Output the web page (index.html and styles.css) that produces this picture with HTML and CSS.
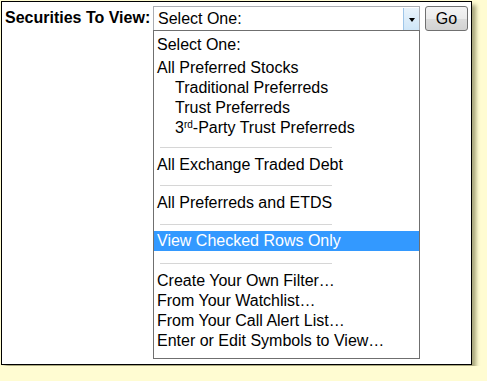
FILE: index.html
```html
<!DOCTYPE html>
<html lang="en">
<head>
    <meta charset="UTF-8">
    <title>Securities To View</title>
    <link rel="stylesheet" href="styles.css">
</head>
<body>
    <div class="frame">
        <div class="field-label">Securities To View:</div>

        <div class="picker">
            <div class="select-box">
                <span class="select-value">Select One:</span>
                <span class="select-arrow"></span>
            </div>
            <div class="option-list">
                <div class="option first">Select One:</div>
                <div class="option">All Preferred Stocks</div>
                <div class="option sub">Traditional Preferreds</div>
                <div class="option sub">Trust Preferreds</div>
                <div class="option sub">3<sup>rd</sup>-Party Trust Preferreds</div>
                <div class="divider"></div>
                <div class="option">All Exchange Traded Debt</div>
                <div class="divider wide"></div>
                <div class="option">All Preferreds and ETDS</div>
                <div class="divider before-active"></div>
                <div class="option active">View Checked Rows Only</div>
                <div class="divider after-active"></div>
                <div class="option">Create Your Own Filter…</div>
                <div class="option">From Your Watchlist…</div>
                <div class="option">From Your Call Alert List…</div>
                <div class="option">Enter or Edit Symbols to View…</div>
            </div>
        </div>

        <button class="go-button">Go</button>
    </div>
</body>
</html>
```

FILE: styles.css
```css
body {
    margin: 0;
    background-color: #fffcd2;
    font-family: 'Liberation Sans', Arial, sans-serif;
    color: #000;
}

.frame {
    margin: 1px;
    width: 466px;
    height: 358px;
    border: 1px solid #000;
    background-color: #fff;
    box-shadow: 4px 4px 4px rgba(60, 60, 20, 0.45);
    display: flex;
    align-items: flex-start;
    padding: 4px 0 0 3px;
}

.field-label {
    flex: 0 0 148px;
    font-weight: bold;
    font-size: 16px;
    line-height: 24px;
    white-space: nowrap;
}

.picker {
    width: 267px;
    display: flex;
    flex-direction: column;
}

.select-box {
    height: 24px;
    border: 1px solid #abadb3;
    border-bottom: none;
    box-sizing: border-box;
    display: flex;
    align-items: flex-start;
    padding-top: 1px;
}

.select-value {
    flex: 1;
    font-size: 16px;
    line-height: 22px;
    padding-left: 4px;
}

.select-arrow {
    width: 16px;
    height: 22px;
    box-sizing: border-box;
    border-left: 1px solid #9fc6e9;
    background: linear-gradient(to bottom, #eaf4fc, #cfe6f8);
    display: flex;
    align-items: center;
    justify-content: center;
}

.select-arrow::after {
    content: "";
    border-left: 3px solid transparent;
    border-right: 3px solid transparent;
    border-top: 4px solid #000;
    margin-top: 1px;
}

.option-list {
    height: 329px;
    border: 1px solid #6f6f6f;
    box-sizing: border-box;
    padding: 4px 0 7px 0;
}

.option {
    font-size: 16px;
    line-height: 20px;
    height: 20px;
    padding-left: 3px;
    white-space: nowrap;
}

.option.first {
    margin-bottom: 3px;
}

.option.sub {
    padding-left: 21px;
}

.option sup {
    font-size: 10px;
    line-height: 0;
    vertical-align: 5px;
}

.option.active {
    background-color: #3399ff;
    color: #fff;
}

.divider {
    height: 1px;
    width: 172px;
    margin: 9px 0 7px 6px;
    background-color: #d6d6d6;
}

.divider.wide {
    margin-top: 10px;
}

.divider.before-active {
    margin-top: 11px;
    margin-bottom: 6px;
}

.divider.after-active {
    margin-top: 12px;
}

.go-button {
    margin-left: 5px;
    width: 43px;
    height: 25px;
    padding: 0;
    border: 1px solid #707070;
    border-radius: 3px;
    background: linear-gradient(to bottom, #f4f4f4 0%, #ebebeb 50%, #dcdcdc 51%, #d2d2d2 100%);
    font-family: 'Liberation Sans', Arial, sans-serif;
    font-size: 16px;
    color: #000;
}
```
